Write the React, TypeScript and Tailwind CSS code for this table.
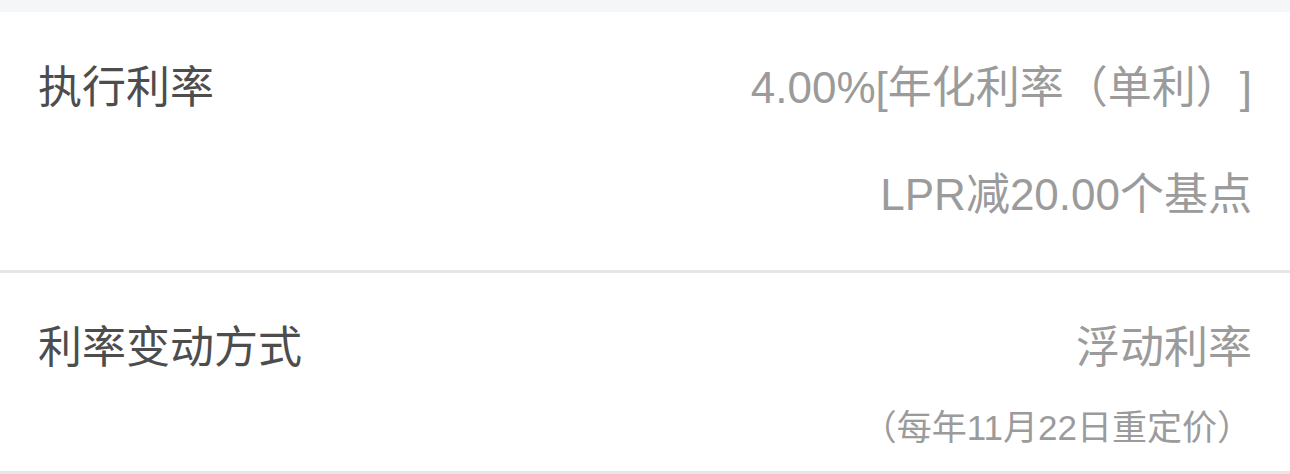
import React from 'react';

const FONT = { fontFamily: '"Liberation Sans", "Noto Sans CJK SC", sans-serif' };

interface RowProps {
  label: string;
  lines: string[];
  note?: string;
  first?: boolean;
}

const InfoRow: React.FC<RowProps> = ({ label, lines, note, first }) => (
  <div className="border-b-[3px] border-[#e6e6e6] bg-white">
    <div
      className={`flex items-start justify-between pl-[38px] pr-[38px] ${
        first ? 'pt-[46px] pb-[45px]' : 'pt-[45px] pb-[23px]'
      }`}
    >
      <span className="text-[44px] leading-[60px] text-[#4d4d4d]">{label}</span>
      <div className="flex flex-col items-end [text-spacing-trim:space-all]">
        {lines.map((line, i) => (
          <span
            key={i}
            className={`text-[44px] leading-[60px] text-[#9b9b9b] ${i > 0 ? 'mt-[47px]' : ''}`}
          >
            {line}
          </span>
        ))}
        {note && (
          <span className="mt-[30px] text-[35px] leading-[40px] text-[#9b9b9b]">{note}</span>
        )}
      </div>
    </div>
  </div>
);

export default function App() {
  return (
    <div className="w-[1290px] h-[474px] overflow-hidden bg-white" style={FONT}>
      <div className="h-[12px] bg-[#f5f6f8]" />
      <InfoRow first label="执行利率" lines={['4.00%[年化利率（单利）]', 'LPR减20.00个基点']} />
      <InfoRow label="利率变动方式" lines={['浮动利率']} note="（每年11月22日重定价）" />
    </div>
  );
}
